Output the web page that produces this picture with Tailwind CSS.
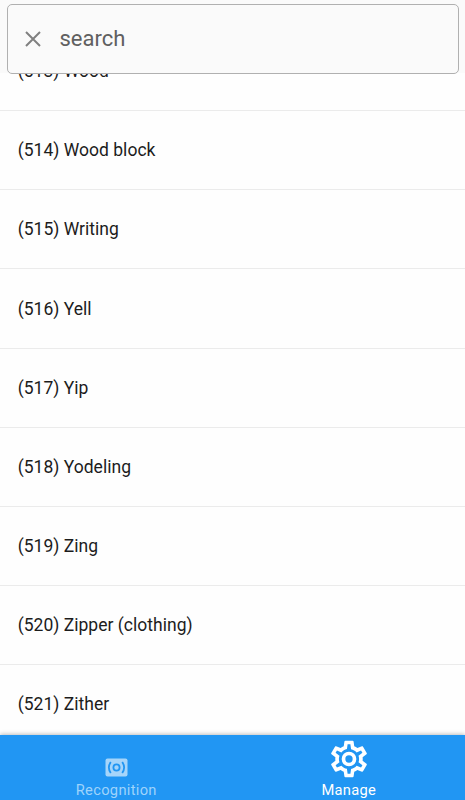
<!DOCTYPE html>
<html lang="en">
<head>
<meta charset="utf-8">
<title>Manage</title>
<script src="https://cdn.jsdelivr.net/npm/@tailwindcss/browser@4"></script>
</head>
<body class="bg-[#fefefe] font-['Roboto',sans-serif]">
<div class="flex h-[800px] w-[465px] flex-col overflow-hidden">
  <header class="h-[73px] shrink-0 bg-[#fafafa] pt-1 pr-1.5 pl-[6.5px]">
    <div class="relative z-10 flex h-[69.5px] items-center rounded-[5px] border-[1.5px] border-[#b0b0b0] bg-[#fafafa] pl-[17px]">
      <svg class="size-4 shrink-0" viewBox="0 0 16 16" fill="none" stroke="#808080" stroke-width="2"><path d="M1 1 15 15M15 1 1 15"/></svg>
      <span class="ml-[19px] text-[22px] leading-7 text-[#606060]">search</span>
    </div>
  </header>
  <main class="min-h-0 flex-1 overflow-hidden text-[17.5px] tracking-[0.02px] text-[#1c1c1c]">
    <ul class="-mt-[41px]">
      <li class="flex h-[79.15px] items-center border-b border-[#ebebeb] pt-[0.3px] pl-[17.7px]">(513) Wood</li>
      <li class="flex h-[79.15px] items-center border-b border-[#ebebeb] pt-[0.3px] pl-[17.7px]">(514) Wood block</li>
      <li class="flex h-[79.15px] items-center border-b border-[#ebebeb] pt-[0.3px] pl-[17.7px]">(515) Writing</li>
      <li class="flex h-[79.15px] items-center border-b border-[#ebebeb] pt-[0.3px] pl-[17.7px]">(516) Yell</li>
      <li class="flex h-[79.15px] items-center border-b border-[#ebebeb] pt-[0.3px] pl-[17.7px]">(517) Yip</li>
      <li class="flex h-[79.15px] items-center border-b border-[#ebebeb] pt-[0.3px] pl-[17.7px]">(518) Yodeling</li>
      <li class="flex h-[79.15px] items-center border-b border-[#ebebeb] pt-[0.3px] pl-[17.7px]">(519) Zing</li>
      <li class="flex h-[79.15px] items-center border-b border-[#ebebeb] pt-[0.3px] pl-[17.7px]">(520) Zipper (clothing)</li>
      <li class="flex h-[79.15px] items-center border-b border-[#ebebeb] pt-[0.3px] pl-[17.7px]">(521) Zither</li>
    </ul>
  </main>
  <nav class="relative z-10 grid h-[65px] shrink-0 grid-cols-2 bg-[#2196f3] text-[14.7px] leading-[17px] tracking-[0.3px] shadow-[0_-1px_4px_rgba(0,0,0,0.25)]">
    <div class="flex flex-col items-center justify-end pb-px text-[#9ed3fb]">
      <svg class="mb-[5px] h-[19px] w-[23px]" viewBox="0 0 23 19" fill="none"><rect x=".5" y=".5" width="22" height="18" rx="2" fill="#a6d5fa"/><g stroke="#2196f3" stroke-width="1.8"><circle cx="11.5" cy="9.5" r="3.1"/><path d="M5.8 4Q1.9 9.5 5.8 15M17.2 4Q21.1 9.5 17.2 15"/></g></svg>
      <span>Recognition</span>
    </div>
    <div class="flex flex-col items-center justify-end pb-px text-white">
      <svg class="mb-[1.5px] size-11" viewBox="0 0 24 24" fill="currentColor"><path d="M12 8a4 4 0 1 1 0 8 4 4 0 0 1 0-8m0 2a2 2 0 1 0 0 4 2 2 0 0 0 0-4M10 22C9.75 22 9.54 21.82 9.5 21.58L9.13 18.93C8.5 18.68 7.96 18.34 7.44 17.94L4.95 18.95C4.73 19.03 4.46 18.95 4.34 18.73L2.34 15.27C2.21 15.05 2.27 14.78 2.46 14.63L4.57 12.97L4.5 12L4.57 11L2.46 9.37C2.27 9.22 2.21 8.95 2.34 8.73L4.34 5.27C4.46 5.05 4.73 4.96 4.95 5.05L7.44 6.05C7.96 5.66 8.5 5.32 9.13 5.07L9.5 2.42C9.54 2.18 9.75 2 10 2H14C14.25 2 14.46 2.18 14.5 2.42L14.87 5.07C15.5 5.32 16.04 5.66 16.56 6.05L19.05 5.05C19.27 4.96 19.54 5.05 19.66 5.27L21.66 8.73C21.79 8.95 21.73 9.22 21.54 9.37L19.43 11L19.5 12L19.43 13L21.54 14.63C21.73 14.78 21.79 15.05 21.66 15.27L19.66 18.73C19.54 18.95 19.27 19.04 19.05 18.95L16.56 17.95C16.04 18.34 15.5 18.68 14.87 18.93L14.5 21.58C14.46 21.82 14.25 22 14 22H10M11.25 4L10.88 6.61C9.68 6.86 8.62 7.5 7.85 8.39L5.44 7.35L4.69 8.65L6.8 10.2C6.4 11.37 6.4 12.64 6.8 13.8L4.68 15.36L5.43 16.66L7.86 15.62C8.63 16.5 9.68 17.14 10.87 17.38L11.24 20H12.76L13.13 17.39C14.32 17.14 15.37 16.5 16.14 15.62L18.57 16.66L19.32 15.36L17.2 13.81C17.6 12.64 17.6 11.37 17.2 10.2L19.31 8.65L18.56 7.35L16.15 8.39C15.38 7.5 14.32 6.86 13.12 6.62L12.75 4H11.25Z"/></svg>
      <span>Manage</span>
    </div>
  </nav>
</div>
</body>
</html>
